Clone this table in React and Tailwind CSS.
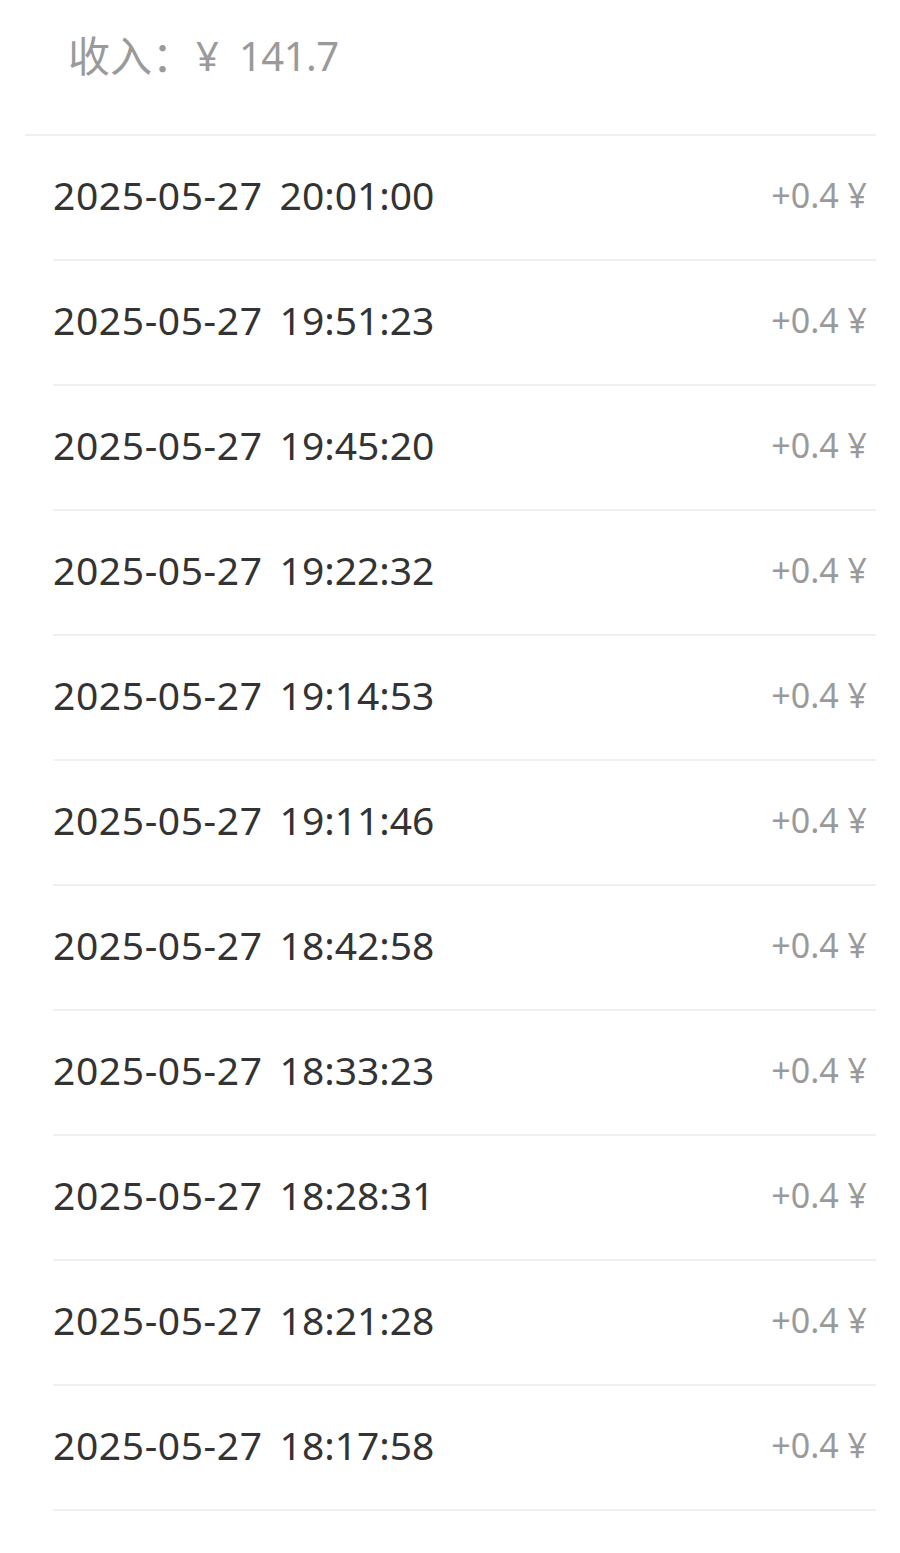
export default function App() {
  const times = [
    "20:01:00",
    "19:51:23",
    "19:45:20",
    "19:22:32",
    "19:14:53",
    "19:11:46",
    "18:42:58",
    "18:33:23",
    "18:28:31",
    "18:21:28",
    "18:17:58",
  ];
  return (
    <div className="w-[900px] h-[1553px] bg-white" style={{ fontFamily: '"Noto Sans", "Noto Sans CJK SC", sans-serif' }}>
      <div className="mx-[25px] w-[851px] h-[136px] border-b-2 border-[#f0f0f0] flex items-center pl-[43px] pb-[22px]">
        <span className="text-[42px] text-[#9a9a9a] leading-none">收入：</span>
        <span className="text-[40px] text-[#9a9a9a] leading-none ml-[2px]">¥</span>
        <span className="text-[40px] text-[#9a9a9a] leading-none ml-[20px] tracking-[-0.5px]">141.7</span>
      </div>
      <div className="ml-[53px] w-[823px]">
        {times.map((t) => (
          <div key={t} className="h-[125px] border-b-2 border-[#f0f0f0] flex items-center justify-between pr-[9px] pb-[6px]">
            <span className="text-[39px] text-[#333333] leading-none">
              <span className="tracking-[0.6px]">2025-05-27</span>
              <span className="ml-[17px]">{t}</span>
            </span>
            <span className="text-[34px] text-[#9a9a9a] leading-none">+0.4 ¥</span>
          </div>
        ))}
      </div>
    </div>
  );
}
